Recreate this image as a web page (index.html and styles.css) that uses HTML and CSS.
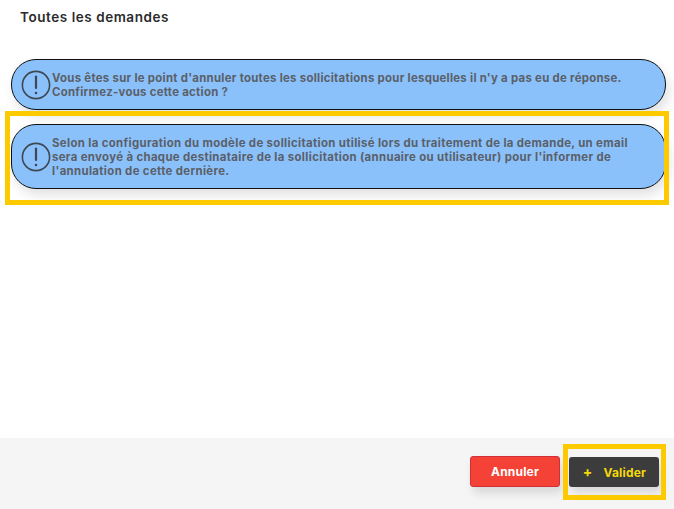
FILE: index.html
```html
<!DOCTYPE html>
<html lang="fr">
<head>
<meta charset="utf-8">
<title>Toutes les demandes</title>
<link rel="stylesheet" href="styles.css">
</head>
<body>
<div class="page">
  <main class="content">
    <h1 class="title">Toutes les demandes</h1>
    <div class="alerts">
      <div class="alert">
        <svg class="alert-icon" viewBox="0 0 30 30" aria-hidden="true"><circle cx="15" cy="15" r="13.6"/><path d="M15 6.5v11.5"/><circle class="dot" cx="15" cy="23" r="1.3"/></svg>
        <p class="alert-text">Vous êtes sur le point d'annuler toutes les sollicitations pour lesquelles il n'y a pas eu de réponse.<br>Confirmez-vous cette action ?</p>
      </div>
      <div class="alert alert-framed">
        <svg class="alert-icon" viewBox="0 0 30 30" aria-hidden="true"><circle cx="15" cy="15" r="13.6"/><path d="M15 6.5v11.5"/><circle class="dot" cx="15" cy="23" r="1.3"/></svg>
        <p class="alert-text">Selon la configuration du modèle de sollicitation utilisé lors du traitement de la demande, un email<br>sera envoyé à chaque destinataire de la sollicitation (annuaire ou utilisateur) pour l'informer de<br>l'annulation de cette dernière.</p>
      </div>
    </div>
  </main>
  <footer class="footer">
    <button class="btn btn-cancel" type="button">Annuler</button>
    <button class="btn btn-ok" type="button"><span class="plus">+</span>Valider</button>
  </footer>
</div>
</body>
</html>
```
FILE: styles.css
```css
* { box-sizing: border-box; }
html, body { margin: 0; height: 100%; }
body { background: #fff; font-family: "Inter", "Liberation Sans", sans-serif; overflow: hidden; }
.page { height: 509px; display: flex; flex-direction: column; }
.content { flex: 1; padding: 8px 8px 0 11px; }
.title { margin: 0 0 33px 9px; font-size: 13.5px; line-height: 18px; font-weight: 600; letter-spacing: .55px; color: #2b2b2b; }
.alerts { display: flex; flex-direction: column; gap: 14px; }
.alert {
  position: relative; display: flex; align-items: center; gap: 1px;
  padding: 0 8px; background: #8ac1fb; border: 1px solid #111; border-radius: 25px;
  box-shadow: 3px 6px 12px rgba(0,0,0,.12);
  height: 51px;
}
.alert-framed { height: 65px; }
.alert-framed::after {
  content: ""; position: absolute; top: -14px; bottom: -17px; left: -7px; right: -4px;
  border: 5px solid #fdca00;
}
.alert-icon { width: 30px; height: 30px; flex: none; margin-left: 1px; fill: none; stroke: #3f4750; stroke-width: 1.6; }
.alert-icon path { stroke-width: 2.2; stroke-linecap: round; }
.alert-icon .dot { fill: #3f4750; stroke: none; }
.alert-text { margin: 0; font-size: 11.4px; line-height: 14px; font-weight: 700; letter-spacing: .28px; color: #5a5f68; white-space: nowrap; }
.alert-framed .alert-text { letter-spacing: .35px; }
.footer {
  height: 71px; flex: none; background: #f5f5f5;
  display: flex; justify-content: flex-end; align-items: flex-start; gap: 9px;
  padding: 18px 15px 0 0;
}
.btn {
  position: relative; width: 90px; height: 31px; padding: 0; border-radius: 3px;
  font: 700 12px/1 "Inter", "Liberation Sans", sans-serif; letter-spacing: .2px;
  box-shadow: 3px 6px 10px rgba(0,0,0,.12);
}
.btn-cancel { background: #f44336; color: #fff; border: 1px solid #d32f3a; }
.btn-ok { background: #3c3c3c; color: #f5d90a; border: 0; height: 30px; margin-top: 1px; padding-left: 1px; }
.btn-ok::after {
  content: ""; position: absolute; top: -13px; bottom: -13px; left: -6px; right: -7px;
  border: 5px solid #fdca00;
}
.plus { margin-right: 11px; font-size: 14px; }
```
